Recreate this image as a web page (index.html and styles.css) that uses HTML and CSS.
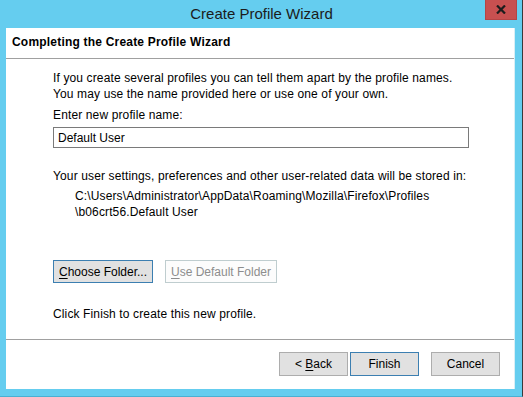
FILE: index.html
```html
<!DOCTYPE html>
<html lang="en">

<head>
  <meta charset="UTF-8" />
  <title>Create Profile Wizard</title>
  <link rel="stylesheet" href="styles.css">
</head>

<body>
  <div class="window">
    <div class="titlebar">
      <span class="title">Create Profile Wizard</span>
      <button class="close" aria-label="Close">
        <svg width="10" height="9" viewBox="0 0 10 9">
          <path d="M1 0.5 L9 8.5 M9 0.5 L1 8.5" stroke="#1c1c1c" stroke-width="2.2" fill="none" />
        </svg>
      </button>
    </div>

    <div class="client">
      <div class="wizard-header">
        <h1>Completing the Create Profile Wizard</h1>
      </div>

      <div class="wizard-page">
        <p class="intro">If you create several profiles you can tell them apart by the profile names.<br>You may use the name provided here or use one of your own.</p>
        <label class="name-label" for="profileName">Enter new profile name:</label>
        <input type="text" id="profileName" class="name-input" value="Default User" />

        <p class="stored">Your user settings, preferences and other user-related data will be stored in:</p>
        <p class="path">C:\Users\Administrator\AppData\Roaming\Mozilla\Firefox\Profiles<br>\b06crt56.Default User</p>

        <div class="folder-buttons">
          <button class="btn btn-default btn-choose"><u>C</u>hoose Folder...</button>
          <button class="btn btn-disabled btn-usedefault" disabled><u>U</u>se Default Folder</button>
        </div>

        <p class="finish-note">Click Finish to create this new profile.</p>
      </div>

      <div class="wizard-footer">
        <button class="btn btn-nav">&lt; <u>B</u>ack</button>
        <button class="btn btn-nav btn-default">Finish</button>
        <button class="btn btn-nav btn-cancel">Cancel</button>
      </div>
    </div>
  </div>
</body>

</html>
```

FILE: styles.css
```css
* {
  box-sizing: border-box;
}

body {
  margin: 0;
  background: #2b2b2b;
  font-family: 'Liberation Sans', Arial, sans-serif;
  font-size: 12px;
  color: #000;
}

.window {
  position: relative;
  width: 523px;
  height: 397px;
  background: #65cdef;
  display: flex;
  flex-direction: column;
  padding: 0 7px 7px 6px;
  border-bottom: 1px solid #4ab0d2;
  border-right: 1px solid #3a3a3a;
}

.titlebar {
  height: 28px;
  display: flex;
  align-items: center;
  justify-content: center;
  margin-left: 2px;
}

.title {
  font-size: 15px;
  color: #1b1b1b;
  padding-bottom: 2px;
}

.close {
  position: absolute;
  top: 0;
  right: 5px;
  width: 32px;
  height: 20px;
  border: 1px solid #b44545;
  border-top: none;
  background: #c75050;
  padding: 0;
  display: flex;
  align-items: center;
  justify-content: center;
}

.client {
  flex: 1;
  background: #fff;
  display: flex;
  flex-direction: column;
  border-right: 1px solid #d8eef6;
}

.wizard-header {
  height: 31px;
  display: flex;
  align-items: center;
  padding: 0 0 2px 6px;
  border-bottom: 1px solid #a0a0a0;
}

.wizard-header h1 {
  font-size: 12px;
  font-weight: bold;
  letter-spacing: 0.2px;
  margin: 0;
}

.wizard-page {
  padding: 11px 0 0 47px;
  display: flex;
  flex-direction: column;
  align-items: flex-start;
  line-height: 16px;
  letter-spacing: 0.13px;
}

.wizard-page p {
  margin: 0;
}

.name-label {
  margin-top: 5px;
}

.name-input {
  margin-top: 4px;
  width: 416px;
  height: 21px;
  border: 1px solid #7a7a7a;
  padding: 0 4px;
  font: inherit;
  color: #000;
}

.stored {
  margin-top: 20px !important;
}

.path {
  margin: 4px 0 0 22px !important;
}

.folder-buttons {
  display: flex;
  gap: 12px;
  margin-top: 40px;
}

.btn {
  font: inherit;
  color: #000;
  height: 23px;
  background: #e1e1e1;
  border: 1px solid #adadad;
  padding: 0;
}

.btn u {
  text-decoration-thickness: 1px;
  text-underline-offset: 2px;
}

.btn-default {
  border-color: #3c7fb1;
}

.btn-choose {
  width: 100px;
}

.btn-disabled {
  background: #fcfcfc;
  border-color: #bfcdcf;
  color: #8d8d8d;
}

.btn-usedefault {
  width: 112px;
}

.finish-note {
  margin-top: 23px !important;
}

.wizard-footer {
  margin-top: auto;
  border-top: 1px solid #a0a0a0;
  padding: 12px 14px 13px 0;
  display: flex;
  justify-content: flex-end;
  gap: 2px;
}

.btn-nav {
  width: 69px;
  height: 24px;
}

.btn-cancel {
  margin-left: 10px;
}
```
